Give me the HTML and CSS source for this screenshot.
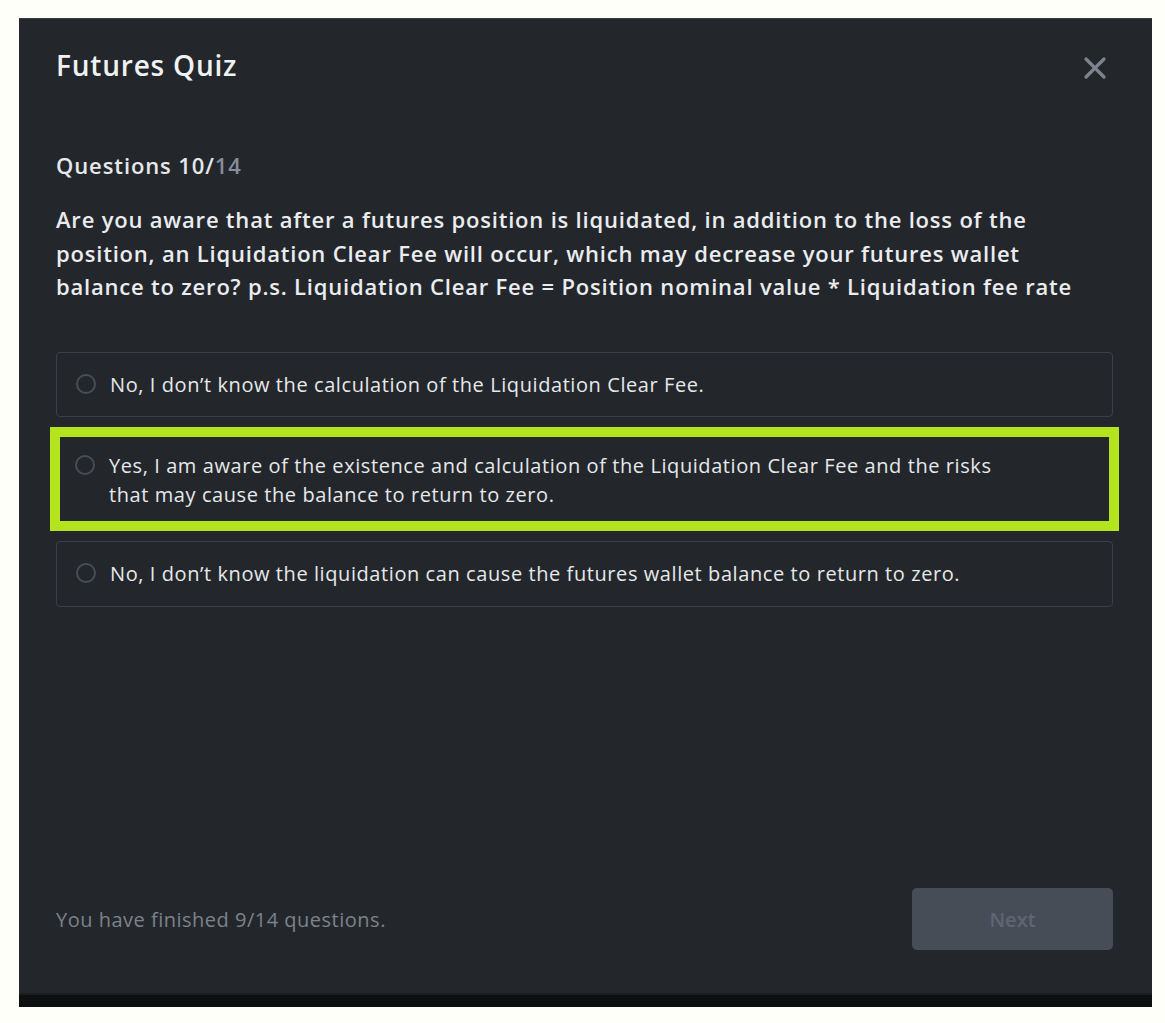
FILE: index.html
```html
<!DOCTYPE html>
<html lang="en">
<head>
  <meta charset="UTF-8">
  <title>Futures Quiz</title>
  <link rel="stylesheet" href="styles.css">
</head>
<body>
  <div class="frame">
    <div class="modal">
      <div class="modal-head">
        <h2>Futures Quiz</h2>
        <button class="close" type="button" aria-label="Close">
          <svg width="24" height="24" viewBox="0 0 24 24">
            <path d="M3 3 L21 21 M21 3 L3 21" stroke="#7d8490" stroke-width="3.2" stroke-linecap="round" fill="none"/>
          </svg>
        </button>
      </div>

      <div class="counter">Questions 10/<span class="total">14</span></div>

      <p class="question">Are you aware that after a futures position is liquidated, in addition to the loss of the<br>position, an Liquidation Clear Fee will occur, which may decrease your futures wallet<br>balance to zero? p.s. Liquidation Clear Fee = Position nominal value * Liquidation fee rate</p>

      <div class="options">
        <label class="option">
          <span class="radio"></span>
          <span>No, I don’t know the calculation of the Liquidation Clear Fee.</span>
        </label>
        <label class="option marked">
          <span class="radio"></span>
          <span>Yes, I am aware of the existence and calculation of the Liquidation Clear Fee and the risks<br>that may cause the balance to return to zero.</span>
        </label>
        <label class="option">
          <span class="radio"></span>
          <span>No, I don’t know the liquidation can cause the futures wallet balance to return to zero.</span>
        </label>
      </div>

      <div class="modal-foot">
        <span class="progress">You have finished 9/14 questions.</span>
        <button class="next" type="button" disabled>Next</button>
      </div>
    </div>
    <div class="strip"></div>
  </div>
</body>
</html>
```

FILE: styles.css
```css
body {
  margin: 0;
  background: #fffff9;
  font-family: "Open Sans", "Noto Sans", sans-serif;
}

.frame {
  width: 1133px;
  margin: 18px 0 0 19px;
}

.modal {
  height: 975px;
  box-sizing: border-box;
  background: #23272b;
  border-top: 1px solid #3a3e43;
  padding: 28px 39px 43px 37px;
  display: flex;
  flex-direction: column;
  color: #eaecef;
}

.strip {
  height: 12px;
  background: #0e0f10;
  border-top: 2px solid #1b1e21;
}

.modal-head {
  display: flex;
  justify-content: space-between;
  align-items: center;
}

.modal-head h2 {
  margin: 0;
  font-size: 28px;
  font-weight: 600;
  letter-spacing: 0.8px;
  line-height: 36px;
  color: #f0f1f2;
}

.close {
  background: none;
  border: none;
  padding: 0;
  margin: 6px 6px 0 0;
  width: 24px;
  height: 24px;
  cursor: pointer;
}

.counter {
  margin-top: 68px;
  font-size: 22px;
  font-weight: 600;
  letter-spacing: 0.9px;
  line-height: 28px;
  color: #e6e8ea;
}

.counter .total {
  color: #848e9c;
}

.question {
  margin: 24px 0 0;
  font-size: 22px;
  font-weight: 600;
  letter-spacing: 0.8px;
  line-height: 33.5px;
  color: #eaecef;
}

.options {
  margin-top: 48px;
  display: flex;
  flex-direction: column;
  gap: 10px;
}

.option {
  display: flex;
  align-items: flex-start;
  gap: 14px;
  padding: 17px 20px 17px 19px;
  border: 1px solid #3b4048;
  border-radius: 4px;
  font-size: 20px;
  font-weight: 500;
  letter-spacing: 0.58px;
  line-height: 29px;
  color: #e6e8ea;
}

.option.marked {
  margin: 0 -6px;
  padding: 14px 14px 12px 15px;
  border: 10px solid #b4e41d;
  border-radius: 0;
}

.option:last-child {
  padding-bottom: 18px;
}

.radio {
  flex: none;
  width: 20px;
  height: 20px;
  margin-top: 4px;
  border: 2px solid #474d57;
  border-radius: 50%;
  box-sizing: border-box;
}

.modal-foot {
  margin-top: auto;
  display: flex;
  justify-content: space-between;
  align-items: center;
}

.progress {
  font-size: 20px;
  letter-spacing: 0.5px;
  color: #7c828c;
}

.next {
  width: 201px;
  height: 62px;
  background: #474d57;
  border: none;
  border-radius: 5px;
  color: #5e6673;
  font-family: inherit;
  font-size: 20px;
  font-weight: 600;
}
```
